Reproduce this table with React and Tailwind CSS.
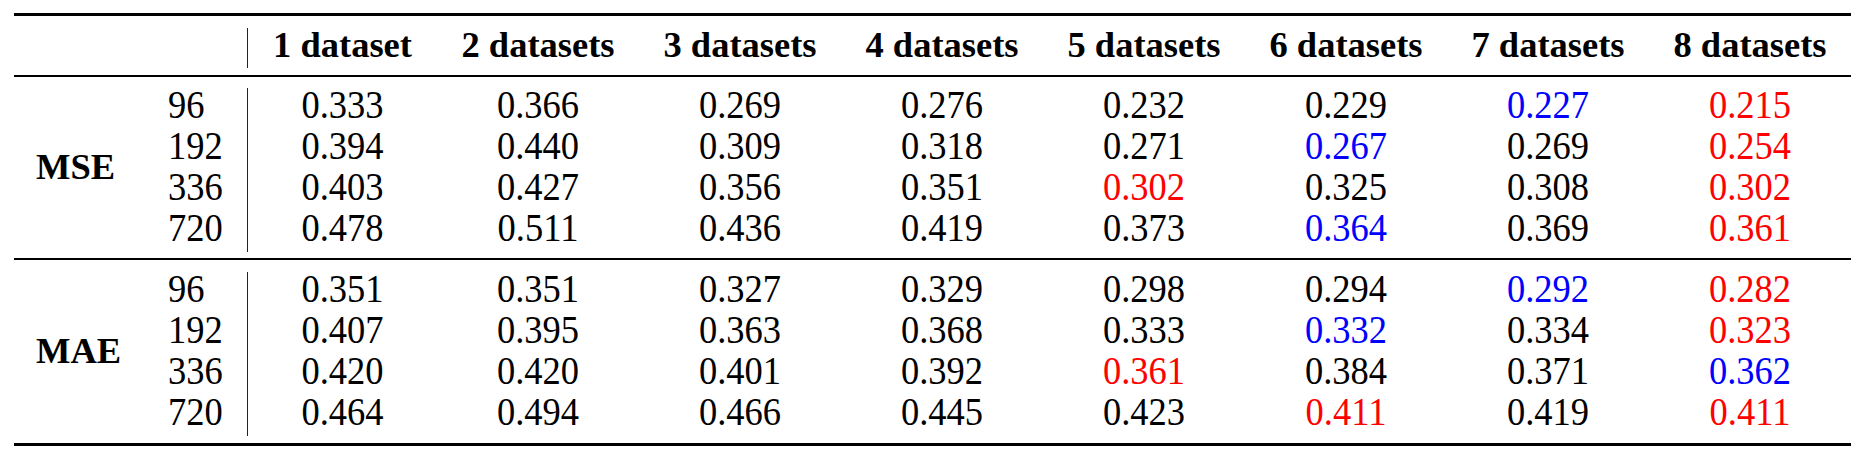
const heads = ['1 dataset', '2 datasets', '3 datasets', '4 datasets', '5 datasets', '6 datasets', '7 datasets', '8 datasets']

// r = best (red), b = second best (blue)
const blocks = [
  {
    label: 'MSE',
    pad: 'pt-[7px] pb-[10px]',
    bar: 'mt-[11px] mb-[6px]',
    rows: [
      ['96', ['0.333', '0.366', '0.269', '0.276', '0.232', '0.229', '0.227 b', '0.215 r']],
      ['192', ['0.394', '0.440', '0.309', '0.318', '0.271', '0.267 b', '0.269', '0.254 r']],
      ['336', ['0.403', '0.427', '0.356', '0.351', '0.302 r', '0.325', '0.308', '0.302 r']],
      ['720', ['0.478', '0.511', '0.436', '0.419', '0.373', '0.364 b', '0.369', '0.361 r']],
    ],
  },
  {
    label: 'MAE',
    pad: 'pt-[8px] pb-[11px]',
    bar: 'mt-[12px] mb-[7px]',
    rows: [
      ['96', ['0.351', '0.351', '0.327', '0.329', '0.298', '0.294', '0.292 b', '0.282 r']],
      ['192', ['0.407', '0.395', '0.363', '0.368', '0.333', '0.332 b', '0.334', '0.323 r']],
      ['336', ['0.420', '0.420', '0.401', '0.392', '0.361 r', '0.384', '0.371', '0.362 b']],
      ['720', ['0.464', '0.494', '0.466', '0.445', '0.423', '0.411 r', '0.419', '0.411 r']],
    ],
  },
]

function Cell({ raw }) {
  const [val, tag] = raw.split(' ')
  const color = tag === 'r' ? 'text-[#ff0000]' : tag === 'b' ? 'text-[#0000ff]' : 'text-black'
  return (
    <div className={color}>
      <span className="inline-block scale-y-110">{val}</span>
    </div>
  )
}

function Block({ block }) {
  return (
    <div className="flex">
      <div className={`w-[132px] pl-[22px] flex items-center font-bold ${block.pad}`}>{block.label}</div>
      <div className={`w-[101px] pl-[22px] flex flex-col ${block.pad}`}>
        {block.rows.map(([h]) => (
          <div key={h}>
            <span className="inline-block scale-y-110">{h}</span>
          </div>
        ))}
      </div>
      <div className={`w-px bg-[#222] ${block.bar}`} />
      <div className={`grid grid-cols-[189px_repeat(7,202px)] text-center ${block.pad}`}>
        {block.rows.map(([h, vals]) => vals.map((v, i) => <Cell key={h + '-' + i} raw={v} />))}
      </div>
    </div>
  )
}

export default function App() {
  return (
    <div className="w-[1864px] h-[462px] bg-white text-black text-[36.5px] leading-[41px] [font-family:'Liberation_Serif','Times_New_Roman',Times,serif]">
      <div className="ml-[14px] w-[1837px] pt-[13px]">
        <div className="h-[3px] bg-black" />
        <div className="flex">
          <div className="w-[233px]" />
          <div className="w-px bg-[#222] mt-[12px] mb-[7px]" />
          <div className="grid grid-cols-[189px_repeat(7,202px)] text-center font-bold pt-[8px] pb-[10px]">
            {heads.map((h) => (
              <div key={h}>{h}</div>
            ))}
          </div>
        </div>
        <div className="h-[2px] bg-black" />
        <Block block={blocks[0]} />
        <div className="h-[2px] bg-black" />
        <Block block={blocks[1]} />
        <div className="h-[3px] bg-black" />
      </div>
    </div>
  )
}
